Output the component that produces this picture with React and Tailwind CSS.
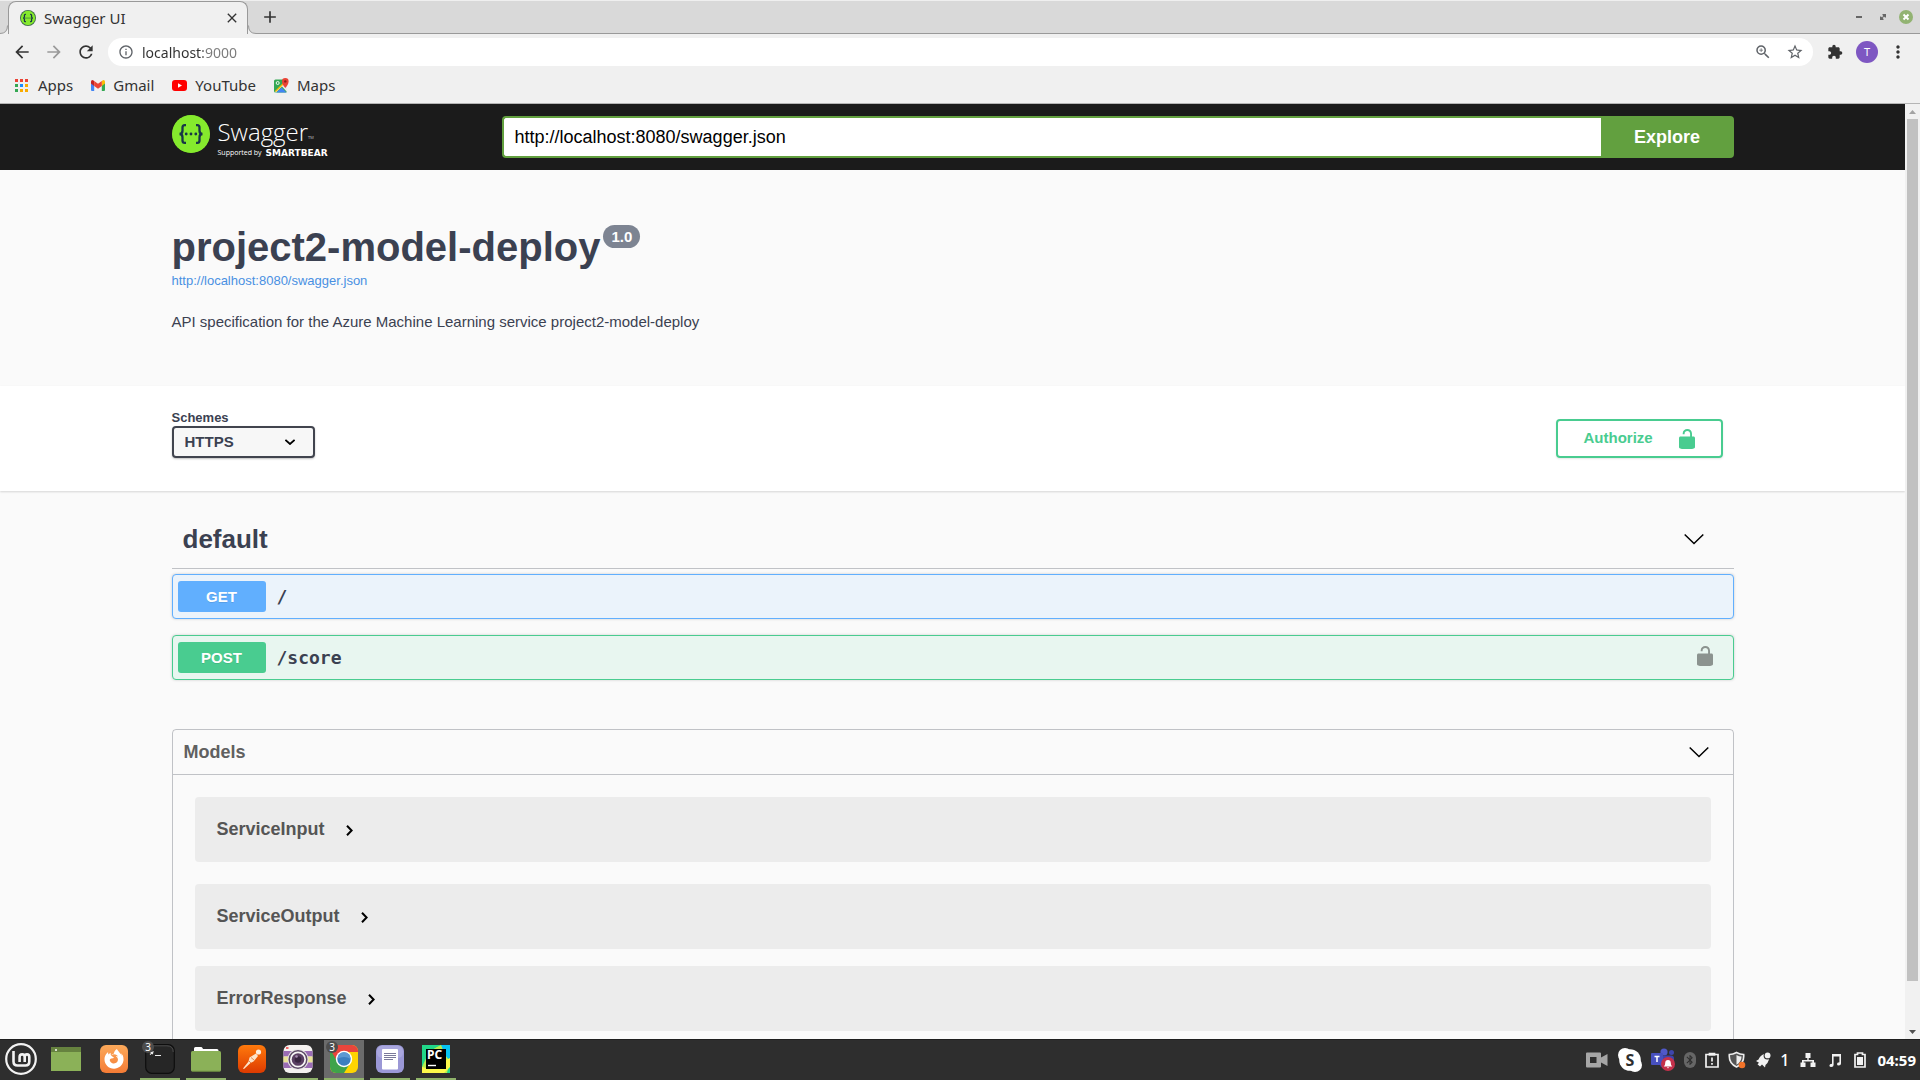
import React from "react";
import {
  MdAdd,
  MdArrowBack,
  MdArrowForward,
  MdBluetooth,
  MdClose,
  MdExtension,
  MdInfoOutline,
  MdMoreVert,
  MdRefresh,
  MdStarBorder,
  MdZoomIn,
} from "react-icons/md";
import { FaFirefoxBrowser } from "react-icons/fa";

const SPEC_URL = "http://localhost:8080/swagger.json";

/* ---------- Browser chrome ---------- */

function SwaggerMark({ className, ring }) {
  return (
    <svg viewBox="0 0 38 38" className={className} aria-hidden="true">
      <circle cx="19" cy="19" r="19" fill={ring ? "#3d6b4a" : "#85ea2d"} />
      <circle cx="19" cy="19" r={ring ? 17 : 18.6} fill="#85ea2d" />
      <g fill="none" stroke="#173647" strokeWidth={ring ? 3 : 2.3}>
        <path d="M14 10.2h-1.2q-2.3 0-2.3 2.4v3.2q0 3.2-3 3.2q3 0 3 3.2v3.2q0 2.4 2.3 2.4H14" />
        <path d="M24 10.2h1.2q2.3 0 2.3 2.4v3.2q0 3.2 3 3.2q-3 0-3 3.2v3.2q0 2.4-2.3 2.4H24" />
      </g>
      <g fill="#173647">
        <circle cx="14.2" cy="19" r="1.4" />
        <circle cx="19" cy="19" r="1.4" />
        <circle cx="23.8" cy="19" r="1.4" />
      </g>
    </svg>
  );
}

function TabStrip() {
  return (
    <div className="flex h-[34px] border-t border-[#efefef] bg-[#d9d9d9]">
      <svg viewBox="0 0 8 33" className="h-[33px] w-2 shrink-0">
        <path d="M0 33V32.5Q8 32.5 8 24.5V33Z" fill="#f0f0f0" />
        <path d="M0 32.5Q7.5 32.5 7.5 24.5" fill="none" stroke="#999" />
      </svg>
      <div className="flex w-60 items-center rounded-t-lg border-x border-t border-[#999] bg-[#f0f0f0] pr-[7px] pl-[11px]">
        <SwaggerMark ring className="size-4 shrink-0" />
        <span className="ml-2 flex-1 text-[15px] text-[#333]">Swagger UI</span>
        <button aria-label="Close tab" className="text-[#333]">
          <MdClose className="size-4" />
        </button>
      </div>
      <svg viewBox="0 0 8 33" className="h-[33px] w-2 shrink-0">
        <path d="M8 33V32.5Q0 32.5 0 24.5V33Z" fill="#f0f0f0" />
        <path d="M8 32.5Q.5 32.5 .5 24.5" fill="none" stroke="#999" />
      </svg>
      <div className="flex flex-1 items-center border-b border-[#999] pr-[7px] pl-1">
        <button aria-label="New tab" className="text-[#333]">
          <MdAdd className="size-5" />
        </button>
        <div className="ml-auto flex items-center">
          <button aria-label="Minimize" className="mr-4 flex w-2 justify-center">
            <span className="h-0.5 w-1.5 bg-[#666]" />
          </button>
          <button aria-label="Restore" className="mr-3">
            <svg viewBox="0 0 8 8" className="size-2" fill="#666">
              <path d="M3 1H7V5L5.800 3.800L5 4.600L3.400 3L4.200 2.200ZM1 3L2.200 4.200L3 3.400L4.600 5L3.800 5.800L5 7H1Z" />
            </svg>
          </button>
          <button aria-label="Close">
            <svg viewBox="0 0 14 14" className="size-3.5">
              <circle cx="7" cy="7" r="7" fill="#92b372" />
              <path d="M4.500 4.500l5 5m0-5l-5 5" stroke="#fff" strokeWidth="2" />
            </svg>
          </button>
        </div>
      </div>
    </div>
  );
}

function Toolbar() {
  return (
    <div className="flex h-9 items-center bg-[#f0f0f0] px-3">
      <div className="flex w-24 items-center gap-3 text-[#333]">
        <button aria-label="Back">
          <MdArrowBack className="size-5" />
        </button>
        <button aria-label="Forward" className="text-[#999]">
          <MdArrowForward className="size-5" />
        </button>
        <button aria-label="Reload">
          <MdRefresh className="size-5" />
        </button>
      </div>
      <div className="flex h-7 flex-1 items-center rounded-full bg-white pr-[9px] pl-2.5 text-[#5f6368]">
        <MdInfoOutline className="size-4" />
        <input
          aria-label="Address"
          defaultValue="localhost:9000"
          className="ml-2 flex-1 bg-[linear-gradient(to_right,#303030_61px,#7a7a7a_61px)] bg-clip-text text-[14px] text-transparent outline-none"
        />
        <div className="flex gap-3.5">
          <button aria-label="Zoom">
            <MdZoomIn className="size-[18px]" />
          </button>
          <button aria-label="Bookmark this tab">
            <MdStarBorder className="size-[18px]" />
          </button>
        </div>
      </div>
      <div className="ml-3.5 flex items-center text-[#333]">
        <button aria-label="Extensions">
          <MdExtension className="size-4" />
        </button>
        <button className="mr-2.5 ml-[13px] size-[22px] rounded-full bg-[#7e57c2] text-[11px] text-white">T</button>
        <button aria-label="Menu">
          <MdMoreVert className="size-5" />
        </button>
      </div>
    </div>
  );
}

function AppsIcon() {
  const colors = ["#ea4335", "#ea4335", "#ea4335", "#34a853", "#1a8cff", "#f9ab00", "#34a853", "#f9ab00", "#f9ab00"];
  return (
    <svg viewBox="0 0 15 13" className="h-[13px] w-[15px]">
      {colors.map((c, i) => (
        <rect key={i} x={(i % 3) * 5} y={Math.floor(i / 3) * 5} width="3" height="3" fill={c} />
      ))}
    </svg>
  );
}

function GmailIcon() {
  return (
    <svg viewBox="0 0 14 11" className="h-[11px] w-3.5">
      <path d="M0 2v8q0 1 1 1h2.2V3.5Z" fill="#4285f4" />
      <path d="M14 2v8q0 1-1 1h-2.2V3.5Z" fill="#34a853" />
      <path d="M10.8.9V6L14 3.600V1.600Q13.700-.8 11.500.4Z" fill="#fbbc04" />
      <path d="M3.200.9V6L0 3.600V1.600Q.3-.8 2.500.4Z" fill="#c5221f" />
      <path d="M3.200.9L7 3.800L10.800.9V6L7 8.800L3.200 6Z" fill="#ea4335" />
    </svg>
  );
}

function YouTubeIcon() {
  return (
    <svg viewBox="0 0 15 11" className="h-[11px] w-[15px]">
      <rect width="15" height="11" rx="3" fill="#f00" />
      <path d="M6 3.200L10 5.500L6 7.800Z" fill="#fff" />
    </svg>
  );
}

function MapsIcon() {
  return (
    <svg viewBox="0 0 15 15" className="size-[15px]">
      <rect x="0" y="1.500" width="13" height="13" rx="1.500" fill="#34a853" />
      <path d="M1 14L13 2V14L8 8.500L2 14.500Z" fill="#e8eaed" />
      <path d="M2.500 14.500L7.500 9.500L12.500 14.500Z" fill="#4285f4" />
      <path d="M1.500 13.500L11 4" stroke="#fbbc04" strokeWidth="1.500" />
      <circle cx="3.700" cy="5" r="1.500" fill="none" stroke="#fff" strokeWidth=".9" />
      <path d="M11.300 10Q8 6 8 3.400A3.300 3.300 0 0 1 14.600 3.400Q14.600 6 11.300 10Z" fill="#ea4335" />
      <circle cx="11.300" cy="3.400" r="1.200" fill="#8a1f17" />
    </svg>
  );
}

function BookmarkBar() {
  const items = [
    ["Apps", <AppsIcon />],
    ["Gmail", <GmailIcon />],
    ["YouTube", <YouTubeIcon />],
    ["Maps", <MapsIcon />],
  ];
  return (
    <nav className="flex h-[34px] items-center gap-[18px] border-b border-[#b5b5b5] bg-[#f0f0f0] pb-[3px] pl-[15px]">
      {items.map(([label, icon]) => (
        <a key={label} href="#" className="flex items-center gap-2 text-[15px] text-[#333]">
          {icon}
          {label}
        </a>
      ))}
    </nav>
  );
}

/* ---------- Swagger page ---------- */

function Wrapper({ className = "", children }) {
  return <div className={`mx-auto w-full max-w-[1606px] px-[22px] ${className}`}>{children}</div>;
}

function Unlock({ className }) {
  return (
    <svg viewBox="0 0 16 20" className={className} fill="currentColor" aria-hidden="true">
      <path d="M13 7.500V4.800C13 2 11 0 8.300 0C5.800 0 3.700 1.600 3.700 4.600V5.200H5.600V4.600C5.600 2.800 6.700 1.900 8.300 1.900C10 1.900 11.100 3 11.100 4.800V7.500H1.500C.7 7.500 0 8.200 0 9V18C0 18.800.5 19.300 1.200 19.500L3 20H13L14.800 19.500C15.500 19.300 16 18.800 16 18V9C16 8.200 15.300 7.500 14.500 7.500Z" />
    </svg>
  );
}

function LargeArrow() {
  return (
    <svg viewBox="0 0 20 12" className="h-3 w-5" fill="none" stroke="#000" strokeWidth="1.5" aria-hidden="true">
      <path d="M.7 1.500L10 10.500L19.300 1.500" />
    </svg>
  );
}

function Topbar() {
  return (
    <header className="bg-[#1b1b1b] py-3">
      <Wrapper className="flex items-start">
        <a href="#" className="flex w-[330px] gap-2 text-white">
          <SwaggerMark className="-mt-px size-[38px]" />
          <span className="flex flex-col font-['Open_Sans',sans-serif]">
            <span className="flex items-end text-[24px] leading-8 font-light">
              Swagger
              <span className="text-[4px] leading-[20px]">TM</span>
            </span>
            <span className="flex h-2.5 items-center gap-1 text-[7px] leading-[10px]">
              <span>Supported by</span>
              <span className="font-['DejaVu_Sans',sans-serif] text-[9px] font-bold">SMARTBEAR</span>
            </span>
          </span>
        </a>
        <form className="flex h-[42px] flex-1" onSubmit={(e) => e.preventDefault()}>
          <input
            aria-label="Specification URL"
            defaultValue={SPEC_URL}
            className="flex-1 rounded-l border-2 border-r-0 border-[#62a03f] bg-white px-[11px] text-[18px] text-black outline-none"
          />
          <button className="w-[133px] rounded-r bg-[#62a03f] text-[18px] font-bold text-white">Explore</button>
        </form>
      </Wrapper>
    </header>
  );
}

function Info() {
  return (
    <section className="pt-[57px] pb-[53px]">
      <Wrapper>
        <div className="flex items-start">
          <h1 className="text-[40px] leading-10 font-bold">project2-model-deploy</h1>
          <span className="-mt-0.5 ml-[3px] rounded-full bg-[#7d8492] px-2 text-[15px] leading-[23px] font-bold text-white">
            1.0
          </span>
        </div>
        <a href="#" className="mt-1 block text-[13px] leading-5 text-[#4990e2]">
          {SPEC_URL}
        </a>
        <p className="mt-5 text-[15px] leading-[22px]">
          API specification for the Azure Machine Learning service project2-model-deploy
        </p>
      </Wrapper>
    </section>
  );
}

function SchemeBar() {
  return (
    <section className="bg-white pt-6 pb-[33px] shadow-[0_1px_2px_0_rgba(0,0,0,0.15)]">
      <Wrapper className="flex items-end justify-between">
        <div>
          <label htmlFor="schemes" className="block text-[13px] leading-4 font-bold">
            Schemes
          </label>
          <div className="grid w-[143px] items-center">
            <select
              id="schemes"
              className="col-start-1 row-start-1 h-8 appearance-none rounded border-2 border-[#41444e] bg-[#f7f7f7] pl-[11px] text-[15px] font-bold shadow-[0_1px_2px_0_rgba(0,0,0,0.25)] outline-none"
            >
              <option>HTTPS</option>
            </select>
            <svg
              viewBox="0 0 10 6"
              className="pointer-events-none col-start-1 row-start-1 mr-5 h-1.5 w-2.5 justify-self-end"
              fill="none"
              stroke="#000"
              strokeWidth="1.8"
            >
              <path d="M.4.8L5 5L9.600.8" />
            </svg>
          </div>
        </div>
        <button className="mr-[11px] flex h-[39px] w-[167px] items-center justify-between rounded border-2 border-[#49cc90] px-[26px] text-[15px] font-bold text-[#49cc90] shadow-[0_1px_2px_rgba(0,0,0,0.1)]">
          Authorize
          <Unlock className="h-5 w-4" />
        </button>
      </Wrapper>
    </section>
  );
}

const METHOD_STYLES = {
  GET: { row: "border-[#61affe] bg-[#ebf3fb]", badge: "bg-[#61affe]" },
  POST: { row: "border-[#49cc90] bg-[#e8f6f0]", badge: "bg-[#49cc90]" },
};

function Operation({ method, path, locked }) {
  const s = METHOD_STYLES[method];
  return (
    <div className={`flex items-center rounded border py-1.5 pr-5 pl-[5px] shadow-[0_0_3px_rgba(0,0,0,0.19)] ${s.row}`}>
      <button className="flex flex-1 items-center text-left">
        <span
          className={`w-[88px] rounded-[3px] text-center text-[15px] leading-[31px] font-bold text-white [text-shadow:0_1px_0_rgba(0,0,0,0.1)] ${s.badge}`}
        >
          {method}
        </span>
        <span className="ml-[11px] font-['DejaVu_Sans_Mono',monospace] text-[18px] leading-[31px] font-bold">{path}</span>
      </button>
      {locked && (
        <button aria-label="Authorization" className="pb-1 text-[#8b938f]">
          <Unlock className="h-5 w-4" />
        </button>
      )}
    </div>
  );
}

function Operations() {
  return (
    <section className="pt-[21px]">
      <Wrapper>
        <button className="flex h-[57px] w-full items-center justify-between border-b border-[rgba(59,65,81,0.3)] pr-[30px] pb-0.5 pl-[11px]">
          <h2 className="text-[26px] leading-8 font-bold">default</h2>
          <LargeArrow />
        </button>
        <div className="mt-[5px] flex flex-col gap-4">
          <Operation method="GET" path="/" />
          <Operation method="POST" path="/score" locked />
        </div>
      </Wrapper>
    </section>
  );
}

function Model({ name, className = "" }) {
  return (
    <button
      className={`mx-[22px] flex h-[65px] items-center gap-[21px] rounded bg-[#ececec] px-[22px] text-[18px] font-bold text-[#555] ${className}`}
    >
      {name}
      <svg viewBox="0 0 7 11" className="mt-0.5 h-[11px] w-[7px]" fill="none" stroke="#000" strokeWidth="2">
        <path d="M1 .7L5.600 5.500L1 10.300" />
      </svg>
    </button>
  );
}

function Models() {
  return (
    <section className="pt-[49px]">
      <Wrapper>
        <div className="flex flex-col rounded border border-[rgba(59,65,81,0.3)] pb-6">
          <button className="flex h-[45px] items-center justify-between border-b border-[rgba(59,65,81,0.3)] pr-6 pl-[11px] text-[18px] font-bold text-[#606060]">
            Models
            <LargeArrow />
          </button>
          <Model name="ServiceInput" className="mt-[22px]" />
          <Model name="ServiceOutput" className="mt-[22px]" />
          <Model name="ErrorResponse" className="mt-[17px]" />
        </div>
      </Wrapper>
    </section>
  );
}

function Scrollbar() {
  return (
    <div className="flex w-[15px] shrink-0 flex-col items-center bg-[#f1f1f1]">
      <svg viewBox="0 0 15 15" className="size-[15px]">
        <path d="M4 10L7.500 6L11 10Z" fill="#a3a3a3" />
      </svg>
      <div className="flex w-full flex-1 flex-col px-0.5">
        <div className="flex-[20] bg-[#c1c1c1]" />
        <div className="flex-1" />
      </div>
      <svg viewBox="0 0 15 15" className="size-[15px]">
        <path d="M4 6L7.500 10L11 6Z" fill="#505050" />
      </svg>
    </div>
  );
}

/* ---------- Desktop panel ---------- */

function MintIcon() {
  return (
    <svg viewBox="0 0 32 32" className="size-8" fill="none" stroke="#f2f2f2">
      <circle cx="16" cy="16" r="14.800" strokeWidth="2.200" />
      <path
        d="M8.500 8V18.500Q8.500 22.500 12.500 22.500H20.500Q24.300 22.500 24.300 18.500V14Q24.300 11.400 22 11.400Q19.700 11.400 19.700 14V19M19.700 14Q19.700 11.400 17.200 11.400Q14.600 11.400 14.600 14V19"
        strokeWidth="2.600"
      />
    </svg>
  );
}

function DesktopIcon() {
  return (
    <svg viewBox="0 0 30 24" className="h-6 w-[30px]">
      <rect width="30" height="24" fill="#8bb158" />
      <rect width="30" height="5" fill="#66823f" />
      <circle cx="5" cy="3" r="1" fill="#fff" />
    </svg>
  );
}

function FirefoxIcon() {
  return (
    <span className="flex size-7 items-center justify-center rounded-md bg-linear-to-b from-[#fba95a] to-[#f47b35] text-white">
      <FaFirefoxBrowser className="size-5" />
    </span>
  );
}

function TerminalIcon() {
  return (
    <svg viewBox="0 0 30 30" className="size-[30px]">
      <rect x=".7" y=".7" width="28.600" height="28.600" rx="6" fill="#262626" stroke="#0e0e0e" strokeWidth="1.200" />
      <path d="M1.800 8Q1.800 1.800 8 1.800H22Q28.200 1.800 28.200 8" fill="none" stroke="#555" strokeWidth=".8" />
      <path d="M5 10.500L8.500 7.500M5.500 8L8 10M10 11.500H16" stroke="#eee" strokeWidth="1.200" />
    </svg>
  );
}

function FolderIcon() {
  return (
    <svg viewBox="0 0 30 26" className="h-[26px] w-[30px]">
      <path d="M3 6V2.500Q3 1 4.500 1H10Q11 1 11.500 2L12 3H26Q27.500 3 27.500 4.500V8H3Z" fill="#fff" />
      <rect y="5" width="30" height="20.500" rx="1.500" fill="#8bb158" />
      <path d="M1 25.300H29" stroke="#66823f" />
    </svg>
  );
}

function PostmanIcon() {
  return (
    <svg viewBox="0 0 28 28" className="size-7">
      <defs>
        <linearGradient id="postman" x2="0" y2="1">
          <stop offset="0" stopColor="#ff7a0c" />
          <stop offset="1" stopColor="#dd3a00" />
        </linearGradient>
      </defs>
      <rect width="28" height="28" rx="6" fill="url(#postman)" />
      <circle cx="20.500" cy="7" r="2.600" fill="#fdeedd" />
      <path d="M18 8.500L20 11L15.500 16.500L12.500 18L6 24L5 23.500L10.500 16.500L11.500 12.500Z" fill="#fde3c8" />
      <path d="M13 12.500L16 15M11 16L13 18" stroke="#c9692f" strokeWidth=".7" />
    </svg>
  );
}

function CameraIcon() {
  return (
    <svg viewBox="0 0 30 28" className="h-7 w-[30px]">
      <rect x=".5" width="29" height="28" rx="6" fill="#f4f1ef" />
      <rect x=".5" y="6" width="29" height="5.500" fill="#9a6cb4" />
      <rect x=".5" y="11.500" width="29" height="6" fill="#e9e295" />
      <rect x=".5" y="17.500" width="29" height="5.500" fill="#9a6cb4" />
      <rect x="3" y="2" width="2.500" height="2" fill="#e66" />
      <circle cx="15" cy="14.500" r="10.500" fill="#e9e6e6" />
      <circle cx="15" cy="14.500" r="8.800" fill="#f7f5f5" stroke="#5d4a66" strokeWidth="1.500" />
      <circle cx="15" cy="14.500" r="6.300" fill="#5a3f62" />
      <circle cx="15" cy="14.500" r="3.300" fill="#38253f" />
      <circle cx="13.500" cy="11.500" r="1.300" fill="#a68bb0" />
    </svg>
  );
}

function ChromeIcon() {
  return (
    <svg viewBox="0 0 28 28" className="size-7">
      <defs>
        <clipPath id="chrome-tile">
          <rect width="28" height="28" rx="6" />
        </clipPath>
      </defs>
      <g clipPath="url(#chrome-tile)">
        <rect width="28" height="28" fill="#ffd400" />
        <path d="M0 0H28V7H14L7 17L0 6Z" fill="#e8453c" />
        <path d="M0 4L8 18L19 20L14 28H0Z" fill="#3fa34a" />
      </g>
      <circle cx="14" cy="14" r="8.200" fill="#fff" />
      <circle cx="14" cy="14" r="6.700" fill="#3b7fc0" />
      <path d="M14 7.300A6.700 6.700 0 0 1 20.700 14Q14 10 7.300 14A6.700 6.700 0 0 1 14 7.300Z" fill="#5c99d2" />
    </svg>
  );
}

function NotesIcon() {
  return (
    <svg viewBox="0 0 28 28" className="size-7">
      <rect width="28" height="28" rx="6" fill="#9b98d6" />
      <rect x="1" y="1" width="26" height="12" rx="5" fill="#aaa7de" />
      <rect x="6" y="4" width="16" height="20.500" rx="1" fill="#fff" />
      <path d="M8 8.500H20M8 10.500H20M8 12.500H20M8 14.500H17" stroke="#6b6a8f" strokeWidth=".9" />
    </svg>
  );
}

function PyCharmIcon() {
  return (
    <svg viewBox="0 0 28 28" className="size-7">
      <rect width="28" height="28" fill="#21d789" />
      <path d="M19 0H28V14L22 12Z" fill="#07c3f2" />
      <path d="M0 15L9 5L19 0L23 10L28 16L25 28H6L0 24Z" fill="#b6ee4e" />
      <path d="M28 13V22L22 28H0V22L8 24Z" fill="#fcf84a" />
      <path d="M0 0H16L6 9L0 22Z" fill="#21d789" />
      <rect x="4" y="4" width="20" height="20" fill="#000" />
      <text x="5" y="14" fill="#fff" fontSize="12" fontWeight="bold" fontFamily="Noto Sans, sans-serif">
        PC
      </text>
      <rect x="6" y="19.800" width="8" height="1.400" fill="#fff" />
    </svg>
  );
}

function Task({ label, open, active, count, children }) {
  return (
    <button
      aria-label={label}
      className={`relative flex w-10 items-center justify-center self-stretch border-b-2 ${
        open ? "border-[#8fb26a]" : "border-transparent"
      } ${active ? "bg-[#6b6b6b]" : ""}`}
    >
      {children}
      {count && (
        <span className="absolute top-px left-0.5 size-3 rounded-full bg-[#4d4d4d] text-center text-[10px] leading-3 text-white">
          {count}
        </span>
      )}
    </button>
  );
}

function Tray() {
  return (
    <div className="ml-auto flex items-center gap-[11px] pr-1 text-white">
      <div className="flex items-center gap-[9px]">
        <svg viewBox="0 0 24 16" className="h-4 w-6" fill="#a6a6a6">
          <path
            fillRule="evenodd"
            d="M2 .5H15Q16 .5 16 1.500V5.500L22.500 2V14L16 10.500V14.500Q16 15.500 15 15.500H2Q1 15.500 1 14.500V1.500Q1 .5 2 .5ZM5 5V11H11.500V5Z"
          />
        </svg>
        <svg viewBox="0 0 24 24" className="size-6">
          <g fill="#fff">
            <circle cx="12" cy="12" r="10.800" />
            <circle cx="7" cy="7" r="7" />
            <circle cx="17" cy="17" r="7" />
          </g>
          <text x="12" y="17.500" textAnchor="middle" fill="#2e2e2e" fontSize="16" fontWeight="bold" fontFamily="Open Sans, sans-serif">
            S
          </text>
        </svg>
        <svg viewBox="0 0 24 24" className="size-6">
          <circle cx="13" cy="4" r="3.600" fill="#5059c9" />
          <circle cx="20.500" cy="4.500" r="2.500" fill="#3f46ad" />
          <rect x="9" y="7.500" width="14" height="12" rx="3" fill="#3e44ac" />
          <rect y="5" width="12" height="12" rx="1" fill="#4750be" />
          <path d="M3.500 8.500H8.500M6 8.500V14" stroke="#fff" strokeWidth="1.500" />
          <circle cx="17" cy="16" r="7" fill="#c4314b" />
          <path d="M12.800 18.500Q14.200 17.500 14.200 15Q14.200 12 17 12Q19.800 12 19.800 15Q19.800 17.500 21.200 18.500ZM15.800 19.300H18.200L17 20.500Z" fill="#fff" />
        </svg>
        <span className="flex h-4 w-3 items-center justify-center rounded-full bg-[#666] text-[#2e2e2e]">
          <MdBluetooth className="size-3.5" />
        </span>
        <svg viewBox="0 0 14 16" className="h-4 w-3.5" fill="none" stroke="#f2f2f2" strokeWidth="1.700">
          <path d="M4 2.500H1V15H13V2.500H10M4.500 1.500H9.500V3H4.500ZM7 5.500V9.500M7 11V12.800" />
        </svg>
        <svg viewBox="0 0 18 18" className="size-[18px]">
          <path d="M8.500 1.500Q12 3.500 15.700 3.500Q16.500 12.500 8.500 16Q.5 12.500 1.300 3.500Q5 3.500 8.500 1.500Z" fill="#555" stroke="#eee" strokeWidth="1.600" />
          <path d="M8.500 4Q11 5.500 13.500 5.500Q13.500 11 8.500 13.800Z" fill="#eee" />
          <circle cx="14" cy="14" r="3.300" fill="#f37329" />
        </svg>
        <svg viewBox="0 0 16 16" className="size-4" fill="#f2f2f2">
          <path d="M1 9L3.500 7.500Q5 3.500 9 2L14 7.500Q13 11 10.500 13L10 15.500L7 12.500L5 14.500L2.500 12.300L4 10.700Z" />
          <circle cx="12.300" cy="3.700" r="3.700" fill="#2e2e2e" />
          <circle cx="12.600" cy="3.400" r="2.900" />
        </svg>
        <span className="text-[16px] leading-5 font-medium">1</span>
      </div>
      <svg viewBox="0 0 16 16" className="size-4" fill="#f2f2f2">
        <path d="M5.500 1H10.500V6H8.700V8H14V10.500H15.500V15H10.500V10.500H12.300V9.500H3.700V10.500H5.500V15H.5V10.500H2V8H7.300V6H5.500Z" />
      </svg>
      <svg viewBox="0 0 16 16" className="size-4" fill="#f2f2f2">
        <path d="M5 2H14V11.500Q14 13.500 11.800 13.500Q10 13.500 10 12Q10 10.300 12.400 10.300V4.500H6.600V13Q6.600 15 4.300 15Q2.400 15 2.400 13.400Q2.400 11.800 5 11.800Z" />
      </svg>
      <svg viewBox="0 0 12 16" className="h-4 w-3">
        <path d="M1 2.500H3.500V1H8.500V2.500H11V15H1Z" fill="none" stroke="#f2f2f2" strokeWidth="1.700" />
        <rect x="3" y="5" width="6" height="8" fill="#f2f2f2" />
      </svg>
      <time className="text-[15px] leading-5 font-bold">04:59</time>
    </div>
  );
}

function Panel() {
  return (
    <footer className="flex h-[41px] shrink-0 items-center border-t border-[#1f1f1f] bg-[#2e2e2e] pl-px">
      <div className="flex items-center self-stretch">
        <Task label="Menu"><MintIcon /></Task>
        <div className="mr-1.5 ml-[5px] flex gap-2 self-stretch">
          <Task label="Show desktop"><DesktopIcon /></Task>
          <Task label="Firefox"><FirefoxIcon /></Task>
        </div>
        <div className="flex gap-1.5 self-stretch">
          <Task label="Terminal" open count="3"><TerminalIcon /></Task>
          <Task label="Files" open><FolderIcon /></Task>
          <Task label="Postman"><PostmanIcon /></Task>
          <Task label="Screenshot" open><CameraIcon /></Task>
          <Task label="Chrome" open active count="3"><ChromeIcon /></Task>
          <Task label="Text editor" open><NotesIcon /></Task>
          <Task label="PyCharm" open><PyCharmIcon /></Task>
        </div>
      </div>
      <Tray />
    </footer>
  );
}

export default function App() {
  return (
    <div className="flex h-screen flex-col overflow-hidden bg-[#fafafa] font-['Noto_Sans',sans-serif]">
      <div className="shrink-0">
        <TabStrip />
        <Toolbar />
        <BookmarkBar />
      </div>
      <div className="flex min-h-0 flex-1">
        <main className="min-w-0 flex-1 overflow-hidden font-['Liberation_Sans',sans-serif] text-[#3b4151]">
          <Topbar />
          <Info />
          <SchemeBar />
          <Operations />
          <Models />
        </main>
        <Scrollbar />
      </div>
      <Panel />
    </div>
  );
}
